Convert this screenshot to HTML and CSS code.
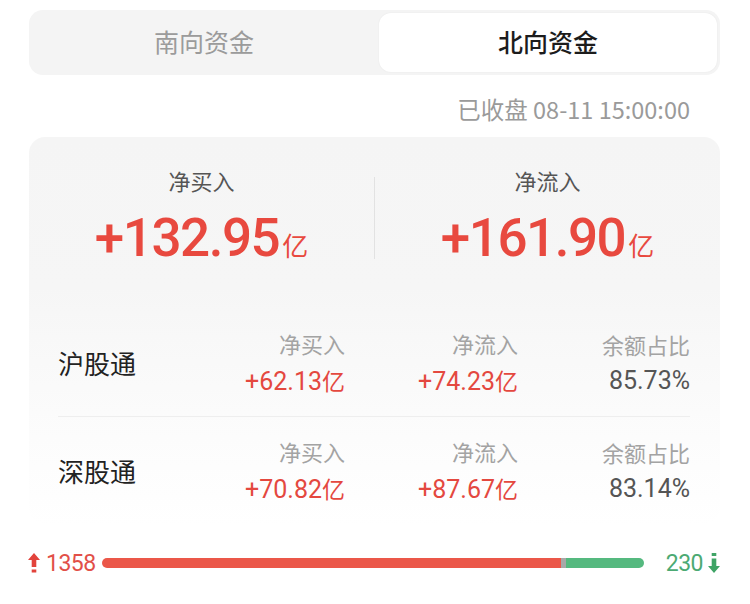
FILE: index.html
```html
<!DOCTYPE html>
<html lang="zh">
<head>
<meta charset="utf-8">
<link rel="stylesheet" href="styles.css">
</head>
<body>
<div class="page">
  <div class="tabs">
    <div class="tab">南向资金</div>
    <div class="tab active">北向资金</div>
  </div>
  <div class="time">已收盘 08-11 15:00:00</div>
  <div class="card">
    <div class="summary">
      <div class="sum-item">
        <div class="sum-label">净买入</div>
        <div class="sum-value">+132.95<span class="unit">亿</span></div>
      </div>
      <div class="divider"></div>
      <div class="sum-item">
        <div class="sum-label">净流入</div>
        <div class="sum-value">+161.90<span class="unit">亿</span></div>
      </div>
    </div>
    <div class="rows">
      <div class="row">
        <div class="name">沪股通</div>
        <div class="cell"><div class="head">净买入</div><div class="val red">+62.13<span class="u">亿</span></div></div>
        <div class="cell"><div class="head">净流入</div><div class="val red">+74.23<span class="u">亿</span></div></div>
        <div class="cell"><div class="head">余额占比</div><div class="val gray">85.73%</div></div>
      </div>
      <div class="row">
        <div class="name">深股通</div>
        <div class="cell"><div class="head">净买入</div><div class="val red">+70.82<span class="u">亿</span></div></div>
        <div class="cell"><div class="head">净流入</div><div class="val red">+87.67<span class="u">亿</span></div></div>
        <div class="cell"><div class="head">余额占比</div><div class="val gray">83.14%</div></div>
      </div>
    </div>
  </div>
  <div class="breadth">
    <svg class="arrow" width="12" height="20" viewBox="0 0 12 20"><polygon points="6,0 12,7 8.3,7 8.3,14 3.7,14 3.7,7 0,7" fill="#e2433c"/><rect x="3.7" y="16.5" width="4.6" height="3" fill="#e2433c"/></svg>
    <span class="up-num">1358</span>
    <div class="bar">
      <div class="seg seg-up" style="flex-grow:1358"></div>
      <div class="seg seg-flat" style="flex-grow:15"></div>
      <div class="seg seg-down" style="flex-grow:230"></div>
    </div>
    <span class="down-num">230</span>
    <svg class="arrow" width="12" height="20" viewBox="0 0 12 20"><rect x="3.7" y="0" width="4.6" height="3" fill="#3fa466"/><polygon points="3.7,5.5 8.3,5.5 8.3,13 12,13 6,20 0,13 3.7,13" fill="#3fa466"/></svg>
  </div>
</div>
</body>
</html>
```

FILE: styles.css
```css
html, body {
  margin: 0;
  padding: 0;
  background: #fff;
}
body {
  width: 750px;
  font-family: Roboto, "Noto Sans CJK SC", sans-serif;
}
.page {
  padding: 10px 30px 0 29px;
}
.tabs {
  display: flex;
  height: 65px;
  box-sizing: border-box;
  background: #f4f4f4;
  border-radius: 14px;
  padding: 3px 3px 3px 0;
}
.tab {
  flex: 1;
  display: flex;
  align-items: center;
  justify-content: center;
  padding-bottom: 3px;
  font-size: 25px;
  color: #9b9b9b;
  font-family: "Noto Sans CJK SC", sans-serif;
}
.tab.active {
  flex: 0 0 338px;
  background: #fff;
  border-radius: 12px;
  color: #1c1c1c;
  font-weight: 500;
  box-shadow: 0 0 2px rgba(0,0,0,0.06);
}
.time {
  text-align: right;
  padding-right: 30px;
  margin-top: 19px;
  font-size: 23.5px;
  line-height: 30px;
  color: #9a9a9a;
  font-family: "Noto Sans CJK SC", sans-serif;
}
.card {
  margin-top: 13px;
  border-radius: 16px;
  background: linear-gradient(#f5f5f5 0px, #f6f6f6 150px, #fcfcfc 300px, #fff 390px);
}
.summary {
  display: flex;
  align-items: center;
  padding: 28px 0 33px;
}
.sum-item {
  flex: 1;
  display: flex;
  flex-direction: column;
  align-items: center;
}
.divider {
  width: 1px;
  height: 82px;
  background: #e2e2e2;
  margin-top: -4px;
}
.sum-label {
  font-size: 22px;
  line-height: 30px;
  color: #555;
  font-family: "Noto Sans CJK SC", sans-serif;
}
.sum-value {
  margin-top: 13px;
  font-size: 53px;
  line-height: 60px;
  font-weight: 500;
  letter-spacing: -1.5px;
  color: #e8493f;
  white-space: nowrap;
}
.unit {
  font-size: 26px;
  font-weight: 400;
  letter-spacing: 0;
  font-family: "Noto Sans CJK SC", sans-serif;
  margin-left: 3px;
}
.rows {
  padding: 0 30px 0 29px;
}
.row {
  display: grid;
  grid-template-columns: 1fr 173px 173px 172px;
  align-items: center;
  height: 108px;
  box-sizing: border-box;
}
.row + .row {
  border-top: 1px solid #eeeeee;
}
.name {
  font-size: 26px;
  color: #222;
  font-family: "Noto Sans CJK SC", sans-serif;
}
.cell {
  text-align: right;
}
.head {
  font-size: 22px;
  line-height: 30px;
  color: #a3a3a3;
  font-family: "Noto Sans CJK SC", sans-serif;
}
.val {
  margin-top: 7px;
  font-size: 25px;
  line-height: 30px;
  white-space: nowrap;
}
.val.red {
  color: #e4483f;
}
.val.gray {
  color: #555;
}
.u {
  font-size: 23px;
  font-family: "Noto Sans CJK SC", sans-serif;
}
.breadth {
  display: flex;
  align-items: center;
  margin-top: 24px;
  margin-left: -1px;
  height: 30px;
}
.arrow {
  flex: 0 0 auto;
}
.up-num {
  margin-left: 6px;
  font-size: 23px;
  letter-spacing: -0.5px;
  color: #e25048;
  width: 57px;
}
.down-num {
  margin-left: 22px;
  font-size: 23px;
  letter-spacing: -0.5px;
  color: #4caa73;
  margin-right: 5px;
}
.bar {
  flex: 0 0 542px;
  display: flex;
  height: 10px;
  border-radius: 5px;
  overflow: hidden;
}
.seg {
  flex-basis: 0;
  flex-shrink: 1;
}
.seg-up { background: #eb5749; }
.seg-flat { background: #a8a8a8; }
.seg-down { background: #55b97f; }
```
